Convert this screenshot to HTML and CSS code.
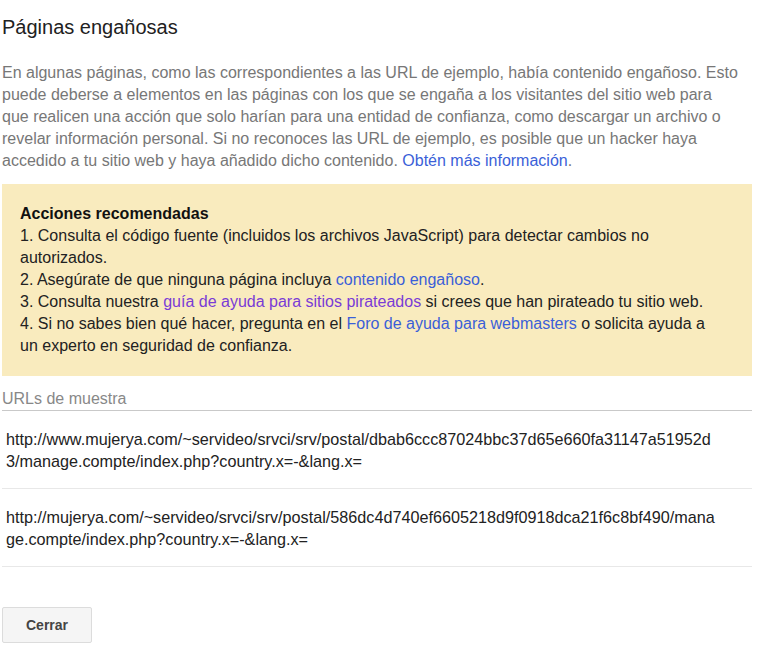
FILE: index.html
```html
<!DOCTYPE html>
<html lang="es">
<head>
<meta charset="utf-8">
<title>Páginas engañosas</title>
<link rel="stylesheet" href="styles.css">
</head>
<body>
<div class="dialog">
  <h1 class="title">Páginas engañosas</h1>
  <p class="intro">En algunas páginas, como las correspondientes a las URL de ejemplo, había contenido engañoso. Esto puede deberse a elementos en las páginas con los que se engaña a los visitantes del sitio web para que realicen una acción que solo harían para una entidad de confianza, como descargar un archivo o revelar información personal. Si no reconoces las URL de ejemplo, es posible que un hacker haya accedido a tu sitio web y haya añadido dicho contenido. <a class="link" href="#">Obtén más información</a>.</p>
  <div class="actions">
    <div class="actions-title">Acciones recomendadas</div>
    <div>1. Consulta el código fuente (incluidos los archivos JavaScript) para detectar cambios no autorizados.</div>
    <div>2. Asegúrate de que ninguna página incluya <a class="link" href="#">contenido engañoso</a>.</div>
    <div>3. Consulta nuestra <a class="link visited" href="#">guía de ayuda para sitios pirateados</a> si crees que han pirateado tu sitio web.</div>
    <div>4. Si no sabes bien qué hacer, pregunta en el <a class="link" href="#">Foro de ayuda para webmasters</a> o solicita ayuda a un experto en seguridad de confianza.</div>
  </div>
  <div class="urls-head">URLs de muestra</div>
  <div class="url-row">http://www.mujerya.com/~servideo/srvci/srv/postal/dbab6ccc87024bbc37d65e660fa31147a51952d3/manage.compte/index.php?country.x=-&amp;lang.x=</div>
  <div class="url-row">http://mujerya.com/~servideo/srvci/srv/postal/586dc4d740ef6605218d9f0918dca21f6c8bf490/manage.compte/index.php?country.x=-&amp;lang.x=</div>
  <button class="btn">Cerrar</button>
</div>
</body>
</html>
```
FILE: styles.css
```css
html, body {
  margin: 0;
  padding: 0;
  background: #fff;
}
body {
  font-family: Arial, "Liberation Sans", sans-serif;
  font-size: 16px;
  line-height: 22px;
}
.dialog {
  width: 750px;
  padding: 0 6px 0 2px;
}
.title {
  margin: 15px 0 0;
  font-size: 20px;
  line-height: 24px;
  font-weight: normal;
  color: #212121;
}
.intro {
  margin: 23px 0 0;
  padding-right: 10px;
  color: #777;
}
.link {
  color: #3b5fd8;
  text-decoration: none;
}
.link.visited {
  color: #7a3bd6;
}
.actions {
  margin-top: 12px;
  background: #f9ebbe;
  padding: 19px 30px 19px 18px;
  color: #222;
}
.actions-title {
  font-weight: bold;
  color: #111;
}
.urls-head {
  margin-top: 12px;
  color: #888;
  border-bottom: 1px solid #c9c9c9;
}
.url-row {
  padding: 17px 33px 16px 4px;
  border-bottom: 1px solid #e8e8e8;
  color: #222;
  font-size: 16.2px;
  word-break: break-all;
}
.btn {
  display: block;
  margin-top: 40px;
  width: 90px;
  height: 36px;
  background: #f5f5f5;
  border: 1px solid #dcdcdc;
  border-radius: 2px;
  font-family: Arial, "Liberation Sans", sans-serif;
  font-size: 14px;
  font-weight: bold;
  color: #444;
  padding: 0;
}
```
